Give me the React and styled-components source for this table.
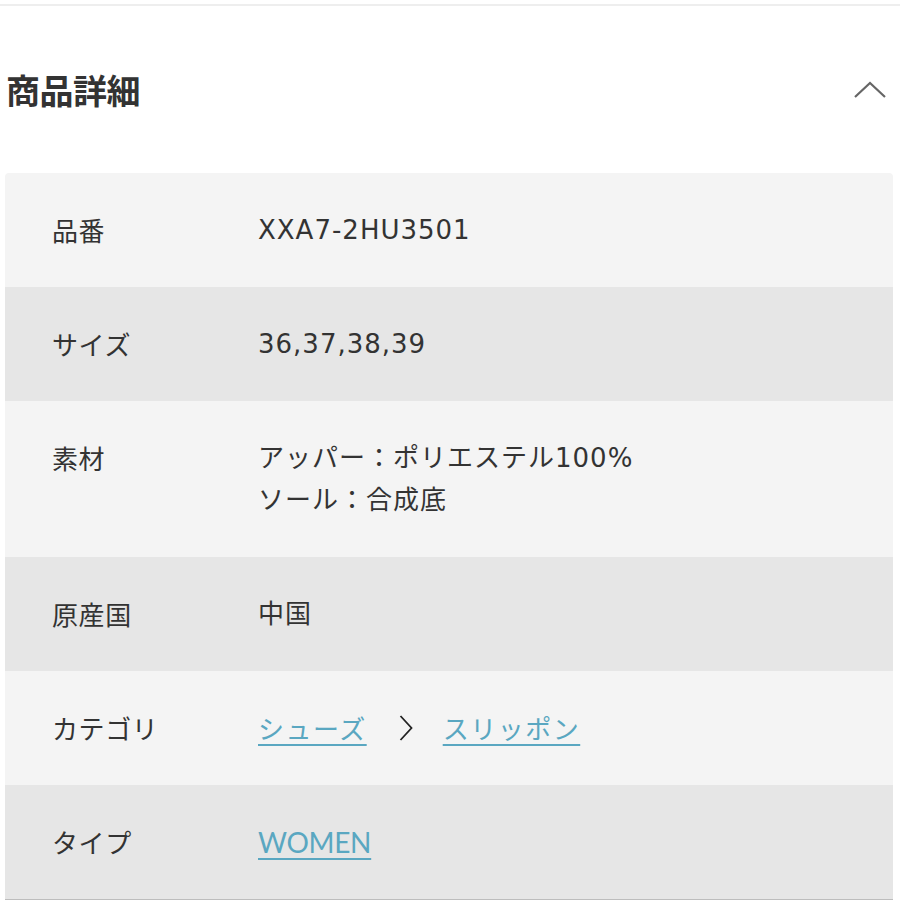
import React from "react";
import styled, { createGlobalStyle } from "styled-components";

const Global = createGlobalStyle`
  html, body { margin: 0; padding: 0; background: #fff; }
  body {
    font-family: "DejaVu Sans", "Noto Sans CJK JP", sans-serif;
    color: #333;
  }
`;

const Page = styled.div`
  width: 900px;
  min-height: 900px;
  border-top: 2px solid #eeeeee;
  margin-top: 4px;
  box-sizing: border-box;
`;

const Header = styled.div`
  display: flex;
  align-items: center;
  justify-content: space-between;
  height: 167px;
  padding: 0 12px 0 6px;
  box-sizing: border-box;
`;

const Title = styled.h2`
  margin: 0;
  font-family: "Noto Sans CJK JP", sans-serif;
  font-size: 34px;
  font-weight: 700;
  color: #333;
  letter-spacing: -0.5px;
`;

const Toggle = styled.button`
  border: 0;
  background: none;
  padding: 0;
  width: 36px;
  height: 24px;
  display: flex;
  align-items: center;
  justify-content: center;
  cursor: pointer;
`;

const Table = styled.dl`
  margin: 0 7px 0 5px;
  border-bottom: 1px solid #bdbdbd;
  border-radius: 4px 4px 0 0;
  overflow: hidden;
`;

const Row = styled.div`
  display: grid;
  grid-template-columns: 206px 1fr;
  padding: 37px 0 37px 47px;
  min-height: 40px;
  background: ${(p) => (p.$alt ? "#e6e6e6" : "#f4f4f4")};
`;

const Label = styled.dt`
  margin: 0;
  font-family: "Noto Sans CJK JP", sans-serif;
  font-size: 26px;
  line-height: 40px;
  letter-spacing: 0.6px;
  color: #333;
`;

const Value = styled.dd`
  margin: 0;
  font-size: 26px;
  line-height: 40px;
  letter-spacing: 1px;
  color: #333;
  display: flex;
  flex-direction: column;
  gap: 2px;
`;

const Line = styled.span`
  display: flex;
  align-items: center;
`;

const Link = styled.a`
  color: #5aa7c1;
  text-decoration: underline;
  text-decoration-thickness: 2px;
  text-underline-offset: 5px;
  font-family: ${(p) => (p.$latin ? '"Lato", sans-serif' : '"Noto Sans CJK JP", sans-serif')};
  font-size: ${(p) => (p.$latin ? "28px" : "26px")};
  letter-spacing: ${(p) => (p.$latin ? "-0.3px" : "1.5px")};
  cursor: pointer;
`;

const Sep = styled.span`
  display: inline-flex;
  margin: 0 30px 0 32px;
`;

const Chevron = () => (
  <svg width="34" height="18" viewBox="0 0 34 18" fill="none">
    <path d="M2 16 L17 2 L32 16" stroke="#666" strokeWidth="2.2" />
  </svg>
);

const Arrow = () => (
  <svg width="14" height="28" viewBox="0 0 14 28" fill="none">
    <path d="M1.5 2 L12.5 14 L1.5 26" stroke="#222" strokeWidth="1.8" />
  </svg>
);

export default function App() {
  return (
    <Page>
      <Global />
      <Header>
        <Title>商品詳細</Title>
        <Toggle aria-label="閉じる">
          <Chevron />
        </Toggle>
      </Header>
      <Table>
        <Row>
          <Label>品番</Label>
          <Value>XXA7-2HU3501</Value>
        </Row>
        <Row $alt>
          <Label>サイズ</Label>
          <Value>36,37,38,39</Value>
        </Row>
        <Row>
          <Label>素材</Label>
          <Value>
            <Line>アッパー：ポリエステル100%</Line>
            <Line>ソール：合成底</Line>
          </Value>
        </Row>
        <Row $alt>
          <Label>原産国</Label>
          <Value>中国</Value>
        </Row>
        <Row>
          <Label>カテゴリ</Label>
          <Value>
            <Line>
              <Link>シューズ</Link>
              <Sep>
                <Arrow />
              </Sep>
              <Link>スリッポン</Link>
            </Line>
          </Value>
        </Row>
        <Row $alt>
          <Label>タイプ</Label>
          <Value>
            <Line>
              <Link $latin>WOMEN</Link>
            </Line>
          </Value>
        </Row>
      </Table>
    </Page>
  );
}
